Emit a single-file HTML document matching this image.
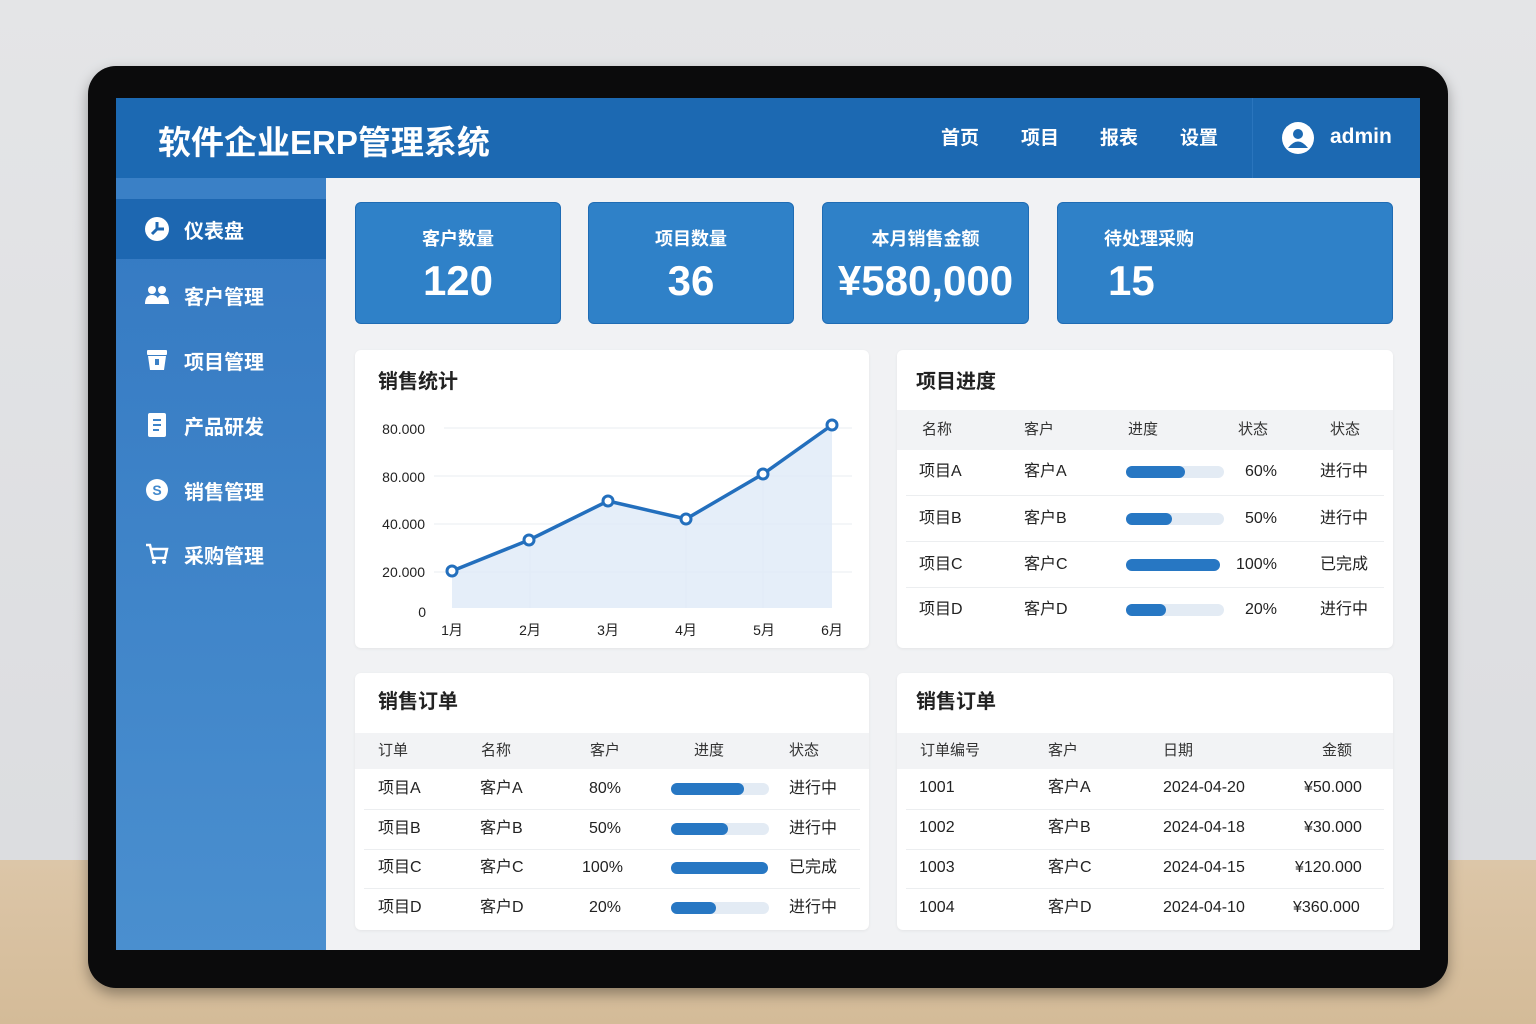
<!DOCTYPE html>
<html><head><meta charset="utf-8">
<style>
*{margin:0;padding:0;box-sizing:border-box}
body{width:1536px;height:1024px;overflow:hidden;position:relative;background:linear-gradient(#e4e5e7,#dcdde0 840px);font-family:"Liberation Sans","Noto Sans CJK SC",sans-serif}
.abs{position:absolute}
.table{left:0;top:860px;width:1536px;height:164px;background:linear-gradient(#dcc6a8,#d4bb98)}
.mon{left:88px;top:66px;width:1360px;height:922px;background:#0b0b0c;border-radius:28px;box-shadow:0 6px 14px rgba(0,0,0,.35)}
.scr{left:116px;top:98px;width:1304px;height:852px;background:#f1f2f4;overflow:hidden}
.hdr{left:0;top:0;width:1304px;height:80px;background:#1c69b2}
.side{left:0;top:80px;width:210px;height:772px;background:linear-gradient(#3479c2,#4a8fcf)}
.w{color:#fff}
.nav{font-size:19px;font-weight:bold;color:#fff;top:30px;line-height:22px}
.si{left:0;width:210px;height:60px;color:#fff;font-size:20px;font-weight:bold;display:flex;align-items:center;padding-left:28px}
.si svg{margin-right:14px}
.stat{background:#2f81c8;border:1px solid #1f6cb4;border-radius:6px;color:#fff;top:104px;height:122px}
.stat .l{position:absolute;top:22px;width:100%;text-align:center;font-size:18px;font-weight:bold}
.stat .v{position:absolute;top:54px;width:100%;text-align:center;font-size:42px;font-weight:bold}
.card{background:#fff;border-radius:6px;box-shadow:0 1px 3px rgba(0,0,0,.06)}
.ct{font-size:20px;font-weight:bold;color:#222;line-height:24px}
.t{font-size:16px;color:#222;position:absolute;line-height:20px}
.th{font-size:15px;color:#333;position:absolute;line-height:20px}
.hbg{background:#f2f3f5;position:absolute}
.bar{position:absolute;height:12px;border-radius:6px;background:#e3ebf4}
.bar i{position:absolute;left:0;top:0;height:12px;border-radius:6px;background:#2777c3}
.ln{position:absolute;height:1px;background:#eceef0}
</style></head><body>
<div class="abs table"></div>
<div class="abs mon"></div>
<div class="abs scr">
 <div class="abs hdr"></div>
 <div class="abs w" style="left:42px;top:18px;font-size:33px;font-weight:bold">软件企业ERP管理系统</div>
 <div class="abs nav" style="left:825px">首页</div>
 <div class="abs nav" style="left:905px">项目</div>
 <div class="abs nav" style="left:984px">报表</div>
 <div class="abs nav" style="left:1064px">设置</div>
 <div class="abs" style="left:1136px;top:0;width:1px;height:80px;background:#2a75bd"></div>
 <svg class="abs" style="left:1165px;top:23px" width="34" height="34" viewBox="0 0 34 34"><circle cx="17" cy="17" r="16" fill="#fff"/><circle cx="17" cy="13" r="5" fill="#1c69b2"/><path d="M7 27 Q17 14 27 27 Z" fill="#1c69b2"/></svg>
 <div class="abs w" style="left:1214px;top:27px;font-size:21px;font-weight:bold">admin</div>

 <div class="abs side"></div>
 <div class="abs" style="left:0;top:80px;width:210px;height:21px;background:#3a80c6"></div>
 <div class="abs si" style="top:101px;background:#1d67b1"><svg width="26" height="26" viewBox="0 0 26 26"><circle cx="13" cy="13" r="12" fill="#fff"/><path d="M13 13 L20 13 M13 13 L13 6 M13 13 L8 18" stroke="#1d67b1" stroke-width="3"/></svg>仪表盘</div>
 <div class="abs si" style="top:167px"><svg width="26" height="22" viewBox="0 0 26 22"><circle cx="8" cy="6" r="4" fill="#fff"/><circle cx="18" cy="6" r="4" fill="#fff"/><path d="M1 20 Q1 11 8 11 Q15 11 15 20Z M13 20 Q13 11 18 11 Q25 11 25 20Z" fill="#fff"/></svg>客户管理</div>
 <div class="abs si" style="top:232px"><svg width="26" height="24" viewBox="0 0 26 24"><rect x="3" y="2" width="20" height="5" rx="1" fill="#fff"/><path d="M4 8 H22 L20 22 H6Z" fill="#fff"/><rect x="11" y="11" width="4" height="6" fill="#3a80c6"/></svg>项目管理</div>
 <div class="abs si" style="top:297px"><svg width="26" height="26" viewBox="0 0 26 26"><rect x="4" y="1" width="18" height="24" rx="2" fill="#fff"/><path d="M9 8H17M9 13H17M9 18H15" stroke="#3d84c9" stroke-width="2"/></svg>产品研发</div>
 <div class="abs si" style="top:362px"><svg width="26" height="26" viewBox="0 0 26 26"><circle cx="13" cy="13" r="11" fill="#fff"/><text x="13" y="18" font-size="14" font-weight="bold" text-anchor="middle" fill="#4188cc" font-family="Liberation Sans">S</text></svg>销售管理</div>
 <div class="abs si" style="top:426px"><svg width="26" height="24" viewBox="0 0 26 24"><path d="M2 3H6L9 16H21L23 7H8" stroke="#fff" stroke-width="2.5" fill="none"/><circle cx="10" cy="20" r="2" fill="#fff"/><circle cx="20" cy="20" r="2" fill="#fff"/></svg>采购管理</div>

 <div class="abs stat" style="left:239px;width:206px"><div class="l">客户数量</div><div class="v">120</div></div>
 <div class="abs stat" style="left:472px;width:206px"><div class="l">项目数量</div><div class="v">36</div></div>
 <div class="abs stat" style="left:706px;width:207px"><div class="l">本月销售金额</div><div class="v">¥580,000</div></div>
 <div class="abs stat" style="left:941px;width:336px"><div class="l" style="text-align:left;left:46px">待处理采购</div><div class="v" style="text-align:left;left:50px">15</div></div>

 <div class="abs card" style="left:239px;top:252px;width:514px;height:298px"></div>
 <div class="abs ct" style="left:262px;top:272px">销售统计</div>
 <svg class="abs" style="left:239px;top:252px" width="514" height="298" viewBox="355 350 514 298">
  <g stroke="#e9edf1" stroke-width="1"><line x1="444" y1="428" x2="852" y2="428"/><line x1="434" y1="476" x2="852" y2="476"/><line x1="434" y1="524" x2="852" y2="524"/><line x1="434" y1="572" x2="852" y2="572"/><line x1="530" y1="540" x2="530" y2="608"/><line x1="686" y1="519" x2="686" y2="608"/><line x1="763" y1="474" x2="763" y2="608"/></g>
  <path d="M452 571 L529 540 L608 501 L686 519 L763 474 L832 425 L832 608 L452 608Z" fill="#dfeaf7" opacity=".8"/>
  <polyline points="452,571 529,540 608,501 686,519 763,474 832,425" fill="none" stroke="#236fbd" stroke-width="3.5"/>
  <g fill="#fff" stroke="#236fbd" stroke-width="3"><circle cx="452" cy="571" r="5"/><circle cx="529" cy="540" r="5"/><circle cx="608" cy="501" r="5"/><circle cx="686" cy="519" r="5"/><circle cx="763" cy="474" r="5"/><circle cx="832" cy="425" r="5"/></g>
  <g font-size="14" fill="#222" font-family="Liberation Sans, Noto Sans CJK SC, sans-serif" text-anchor="end"><text x="425" y="434">80.000</text><text x="425" y="482">80.000</text><text x="425" y="529">40.000</text><text x="425" y="577">20.000</text><text x="426" y="617">0</text></g>
  <g font-size="14" fill="#222" font-family="Liberation Sans, Noto Sans CJK SC, sans-serif" text-anchor="middle"><text x="452" y="635">1月</text><text x="530" y="635">2月</text><text x="608" y="635">3月</text><text x="686" y="635">4月</text><text x="764" y="635">5月</text><text x="832" y="635">6月</text></g>
 </svg>

 <div class="abs card" style="left:781px;top:252px;width:496px;height:298px"></div>
 <div class="abs ct" style="left:800px;top:272px">项目进度</div>
 <div class="hbg" style="left:781px;top:312px;width:496px;height:40px"></div>
 <div class="th" style="left:806px;top:322px">名称</div><div class="th" style="left:908px;top:322px">客户</div><div class="th" style="left:1012px;top:322px">进度</div><div class="th" style="left:1122px;top:322px">状态</div><div class="th" style="left:1214px;top:322px">状态</div>
 <div class="t" style="left:803px;top:364px">项目A</div><div class="t" style="left:908px;top:364px">客户A</div><div class="bar" style="left:1010px;top:368px;width:98px"><i style="width:59px"></i></div><div class="t" style="left:1129px;top:364px">60%</div><div class="t" style="left:1204px;top:364px">进行中</div>
 <div class="ln" style="left:790px;top:397px;width:478px"></div>
 <div class="t" style="left:803px;top:411px">项目B</div><div class="t" style="left:908px;top:411px">客户B</div><div class="bar" style="left:1010px;top:415px;width:98px"><i style="width:46px"></i></div><div class="t" style="left:1129px;top:411px">50%</div><div class="t" style="left:1204px;top:411px">进行中</div>
 <div class="ln" style="left:790px;top:443px;width:478px"></div>
 <div class="t" style="left:803px;top:457px">项目C</div><div class="t" style="left:908px;top:457px">客户C</div><div class="bar" style="left:1010px;top:461px;width:94px"><i style="width:94px"></i></div><div class="t" style="left:1120px;top:457px">100%</div><div class="t" style="left:1204px;top:457px">已完成</div>
 <div class="ln" style="left:790px;top:489px;width:478px"></div>
 <div class="t" style="left:803px;top:502px">项目D</div><div class="t" style="left:908px;top:502px">客户D</div><div class="bar" style="left:1010px;top:506px;width:98px"><i style="width:40px"></i></div><div class="t" style="left:1129px;top:502px">20%</div><div class="t" style="left:1204px;top:502px">进行中</div>

 <div class="abs card" style="left:239px;top:575px;width:514px;height:257px"></div>
 <div class="abs ct" style="left:262px;top:592px">销售订单</div>
 <div class="hbg" style="left:239px;top:635px;width:514px;height:36px"></div>
 <div class="th" style="left:262px;top:643px">订单</div><div class="th" style="left:365px;top:643px">名称</div><div class="th" style="left:474px;top:643px">客户</div><div class="th" style="left:578px;top:643px">进度</div><div class="th" style="left:673px;top:643px">状态</div>
 <div class="t" style="left:262px;top:681px">项目A</div><div class="t" style="left:364px;top:681px">客户A</div><div class="t" style="left:473px;top:681px">80%</div><div class="bar" style="left:555px;top:685px;width:98px"><i style="width:73px"></i></div><div class="t" style="left:673px;top:681px">进行中</div>
 <div class="ln" style="left:248px;top:711px;width:496px"></div>
 <div class="t" style="left:262px;top:721px">项目B</div><div class="t" style="left:364px;top:721px">客户B</div><div class="t" style="left:473px;top:721px">50%</div><div class="bar" style="left:555px;top:725px;width:98px"><i style="width:57px"></i></div><div class="t" style="left:673px;top:721px">进行中</div>
 <div class="ln" style="left:248px;top:751px;width:496px"></div>
 <div class="t" style="left:262px;top:760px">项目C</div><div class="t" style="left:364px;top:760px">客户C</div><div class="t" style="left:466px;top:760px">100%</div><div class="bar" style="left:555px;top:764px;width:97px"><i style="width:97px"></i></div><div class="t" style="left:673px;top:760px">已完成</div>
 <div class="ln" style="left:248px;top:790px;width:496px"></div>
 <div class="t" style="left:262px;top:800px">项目D</div><div class="t" style="left:364px;top:800px">客户D</div><div class="t" style="left:473px;top:800px">20%</div><div class="bar" style="left:555px;top:804px;width:98px"><i style="width:45px"></i></div><div class="t" style="left:673px;top:800px">进行中</div>

 <div class="abs card" style="left:781px;top:575px;width:496px;height:257px"></div>
 <div class="abs ct" style="left:800px;top:592px">销售订单</div>
 <div class="hbg" style="left:781px;top:635px;width:496px;height:36px"></div>
 <div class="th" style="left:804px;top:643px">订单编号</div><div class="th" style="left:932px;top:643px">客户</div><div class="th" style="left:1047px;top:643px">日期</div><div class="th" style="left:1206px;top:643px">金额</div>
 <div class="t" style="left:803px;top:680px">1001</div><div class="t" style="left:932px;top:680px">客户A</div><div class="t" style="left:1047px;top:680px">2024-04-20</div><div class="t" style="left:1188px;top:680px">¥50.000</div>
 <div class="ln" style="left:790px;top:711px;width:478px"></div>
 <div class="t" style="left:803px;top:720px">1002</div><div class="t" style="left:932px;top:720px">客户B</div><div class="t" style="left:1047px;top:720px">2024-04-18</div><div class="t" style="left:1188px;top:720px">¥30.000</div>
 <div class="ln" style="left:790px;top:751px;width:478px"></div>
 <div class="t" style="left:803px;top:760px">1003</div><div class="t" style="left:932px;top:760px">客户C</div><div class="t" style="left:1047px;top:760px">2024-04-15</div><div class="t" style="left:1179px;top:760px">¥120.000</div>
 <div class="ln" style="left:790px;top:790px;width:478px"></div>
 <div class="t" style="left:803px;top:800px">1004</div><div class="t" style="left:932px;top:800px">客户D</div><div class="t" style="left:1047px;top:800px">2024-04-10</div><div class="t" style="left:1177px;top:800px">¥360.000</div>
</div>
</body></html>
